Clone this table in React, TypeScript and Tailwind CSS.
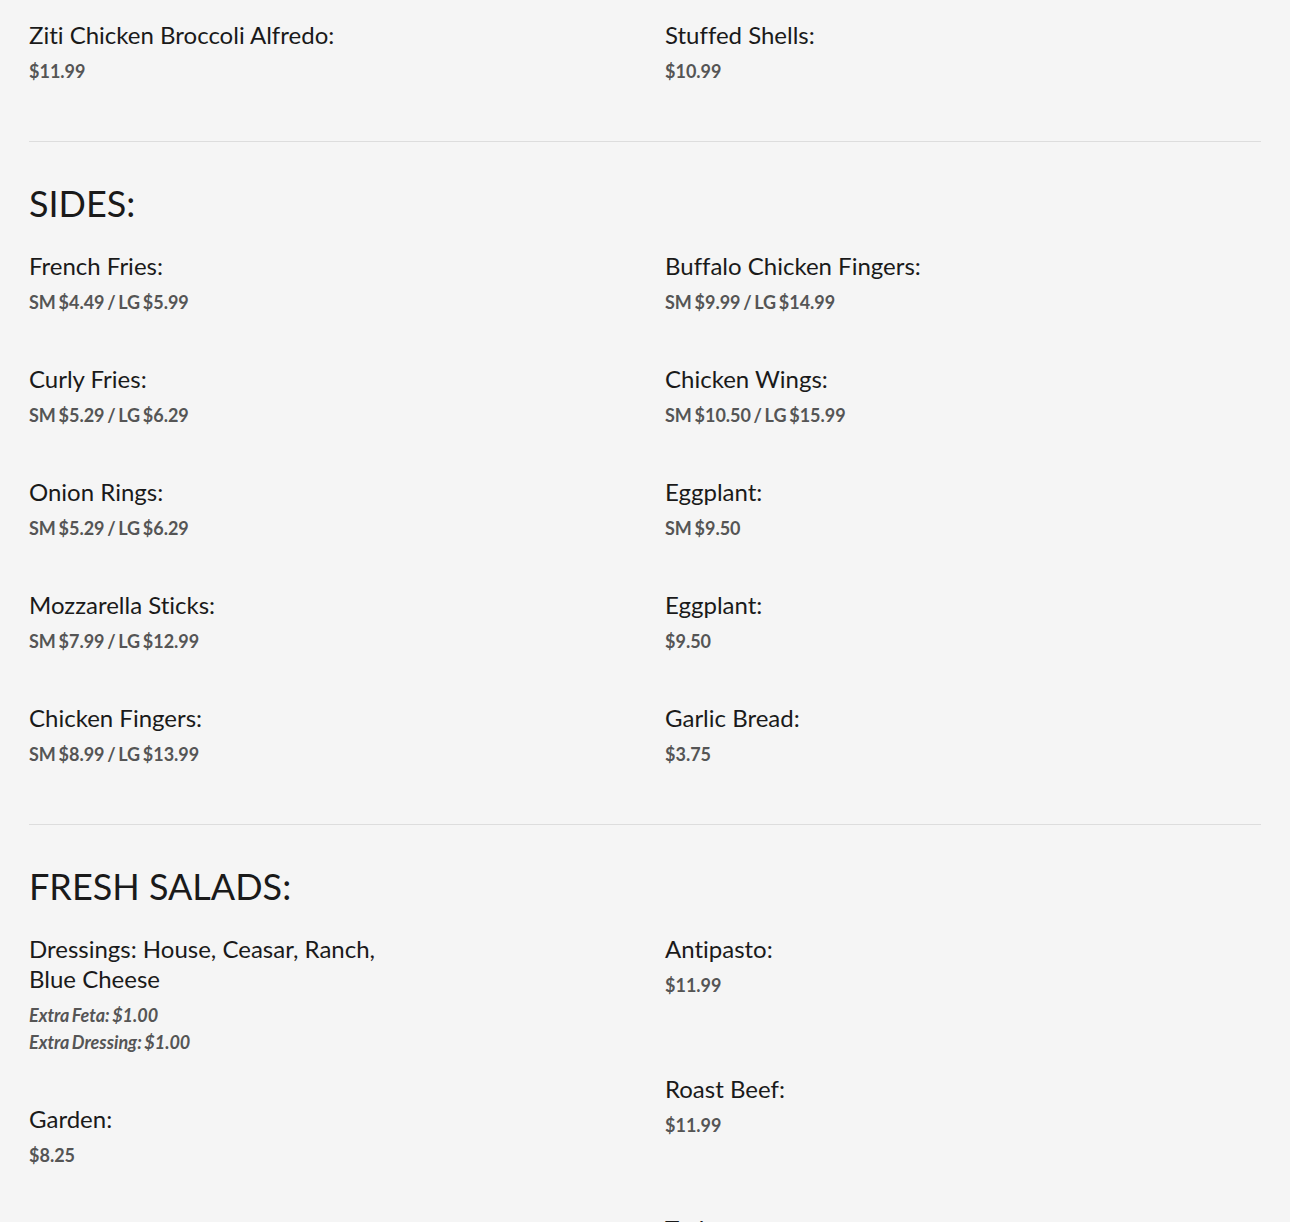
import React from "react";

type Item = {
  name: React.ReactNode;
  prices?: string[];
  italic?: string[];
  spacer?: boolean;
};

function MenuItem({ item }: { item: Item }) {
  return (
    <div className="mb-12">
      <h3 className="text-[24px] leading-[30px] font-normal text-[#1a1a1a]">{item.name}</h3>
      <div className="mt-2">
        {item.prices?.map((p, i) => (
          <p key={i} className="text-[18px] leading-[27px] font-bold text-[#555555] [word-spacing:-1.75px]">
            {p}
          </p>
        ))}
        {item.italic?.map((p, i) => (
          <p key={i} className="text-[18px] leading-[27px] font-bold italic text-[#555555] [word-spacing:-1.5px]">
            {p}
          </p>
        ))}
        {item.spacer && <div className="h-[27px]" />}
      </div>
    </div>
  );
}

function Columns({ left, right }: { left: Item[]; right: Item[] }) {
  return (
    <div className="grid grid-cols-[636px_1fr]">
      <div className="flex flex-col">
        {left.map((it, i) => (
          <MenuItem key={i} item={it} />
        ))}
      </div>
      <div className="flex flex-col">
        {right.map((it, i) => (
          <MenuItem key={i} item={it} />
        ))}
      </div>
    </div>
  );
}

function Heading({ children }: { children: React.ReactNode }) {
  return (
    <h2 className="mt-[37px] mb-[24px] text-[36px] leading-[48px] font-normal text-[#1a1a1a]">
      {children}
    </h2>
  );
}

export default function App() {
  return (
    <div
      className="min-h-screen bg-[#f5f5f5] px-[29px] pt-5 pb-20 [font-variant-ligatures:none]"
      style={{ fontFamily: "Lato, 'Open Sans', sans-serif" }}
    >
      <Columns
        left={[{ name: "Ziti Chicken Broccoli Alfredo:", prices: ["$11.99"] }]}
        right={[{ name: "Stuffed Shells:", prices: ["$10.99"] }]}
      />
      <hr className="mt-2 border-0 border-t border-[#dddddd]" />

      <Heading>SIDES:</Heading>
      <Columns
        left={[
          { name: "French Fries:", prices: ["SM $4.49 / LG $5.99"] },
          { name: "Curly Fries:", prices: ["SM $5.29 / LG $6.29"] },
          { name: "Onion Rings:", prices: ["SM $5.29 / LG $6.29"] },
          { name: "Mozzarella Sticks:", prices: ["SM $7.99 / LG $12.99"] },
          { name: "Chicken Fingers:", prices: ["SM $8.99 / LG $13.99"] },
        ]}
        right={[
          { name: "Buffalo Chicken Fingers:", prices: ["SM $9.99 / LG $14.99"] },
          { name: "Chicken Wings:", prices: ["SM $10.50 / LG $15.99"] },
          { name: "Eggplant:", prices: ["SM $9.50"] },
          { name: "Eggplant:", prices: ["$9.50"] },
          { name: "Garlic Bread:", prices: ["$3.75"] },
        ]}
      />
      <hr className="mt-2 border-0 border-t border-[#dddddd]" />

      <Heading>FRESH SALADS:</Heading>
      <Columns
        left={[
          {
            name: (
              <>
                Dressings: House, Ceasar, Ranch,
                <br />
                Blue Cheese
              </>
            ),
            italic: ["Extra Feta: $1.00", "Extra Dressing: $1.00"],
          },
          { name: "Garden:", prices: ["$8.25"], spacer: true },
          { name: "Greek:", prices: ["$10.99"], spacer: true },
        ]}
        right={[
          { name: "Antipasto:", prices: ["$11.99"], spacer: true },
          { name: "Roast Beef:", prices: ["$11.99"], spacer: true },
          { name: "Turkey:", prices: ["$11.99"], spacer: true },
        ]}
      />
    </div>
  );
}
